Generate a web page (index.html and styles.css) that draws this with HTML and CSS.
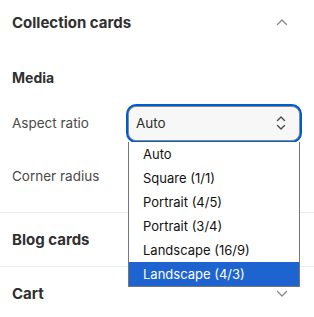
FILE: index.html
```html
<!DOCTYPE html>
<html lang="en">

<head>
    <meta charset="UTF-8">
    <meta name="viewport" content="width=device-width, initial-scale=1.0">
    <title>Theme settings</title>
    <link rel="stylesheet" href="styles.css">
</head>

<body>

    <div class="panel">
        <section class="section open">
            <div class="section-head">
                <h2>Collection cards</h2>
                <svg class="chevron" width="12" height="8" viewBox="0 0 12 8">
                    <polyline points="1.5,6.5 6,2 10.5,6.5" />
                </svg>
            </div>

            <h3 class="group-title">Media</h3>

            <div class="field">
                <label for="aspect">Aspect ratio</label>
                <div class="select-wrap">
                    <div class="select" id="aspect">
                        <span>Auto</span>
                        <svg class="updown" width="10" height="16" viewBox="0 0 10 16">
                            <polyline points="1.5,5.5 5,2 8.5,5.5" />
                            <polyline points="1.5,10.5 5,14 8.5,10.5" />
                        </svg>
                    </div>
                    <ul class="options">
                        <li>Auto</li>
                        <li>Square (1/1)</li>
                        <li>Portrait (4/5)</li>
                        <li>Portrait (3/4)</li>
                        <li>Landscape (16/9)</li>
                        <li class="active">Landscape (4/3)</li>
                    </ul>
                </div>
            </div>

            <div class="field">
                <label>Corner radius</label>
            </div>
        </section>

        <section class="section">
            <div class="section-head">
                <h2>Blog cards</h2>
            </div>
        </section>

        <section class="section">
            <div class="section-head">
                <h2>Cart</h2>
                <svg class="chevron" width="12" height="8" viewBox="0 0 12 8">
                    <polyline points="1.5,1.5 6,6 10.5,1.5" />
                </svg>
            </div>
        </section>
    </div>

</body>

</html>
```

FILE: styles.css
```css
body {
    font-family: 'Inter', 'Noto Sans', sans-serif;
    background-color: #fff;
    color: #303030;
    margin: 0;
    padding: 0;
}

.panel {
    width: 314px;
}

.section {
    border-bottom: 1px solid #ebebeb;
}

.section.open {
    padding-bottom: 17px;
}

.section-head {
    display: flex;
    justify-content: space-between;
    align-items: center;
    height: 53px;
    padding: 0 26px 0 12px;
}

.section.open .section-head {
    height: 44px;
}

h2 {
    margin: 0;
    font-size: 15px;
    font-weight: 650;
    color: #303030;
}

.chevron polyline,
.updown polyline {
    fill: none;
    stroke: #8a8a8a;
    stroke-width: 1.4;
    stroke-linecap: round;
    stroke-linejoin: round;
}

.updown polyline {
    stroke: #4a4a4a;
}

.group-title {
    margin: 24px 12px 16px;
    font-size: 14px;
    font-weight: 650;
    line-height: 20px;
}

.field {
    display: flex;
    align-items: center;
    height: 38px;
    padding: 0 12px;
}

.field + .field {
    margin-top: 15px;
}

.field label {
    width: 116px;
    font-size: 13.5px;
    color: #4a4a4a;
}

.select-wrap {
    position: relative;
}

.select {
    display: flex;
    justify-content: space-between;
    align-items: center;
    box-sizing: border-box;
    width: 172px;
    height: 35px;
    padding: 0 13px 0 7px;
    border: 1px solid #8a8a8a;
    border-radius: 8px;
    background-color: #f7f7f7;
    box-shadow: 0 0 0 2px #005bd3;
    font-size: 13.5px;
}

.options {
    position: absolute;
    top: 36px;
    left: 0;
    z-index: 2;
    box-sizing: border-box;
    width: 172px;
    margin: 0;
    padding: 0;
    list-style: none;
    background-color: #fff;
    border: 1px solid #767676;
    border-top: none;
}

.options li {
    height: 24px;
    line-height: 24px;
    padding-left: 14px;
    font-size: 13px;
    color: #111;
}

.options li.active {
    background-color: #1e64d0;
    color: #fff;
}
```
